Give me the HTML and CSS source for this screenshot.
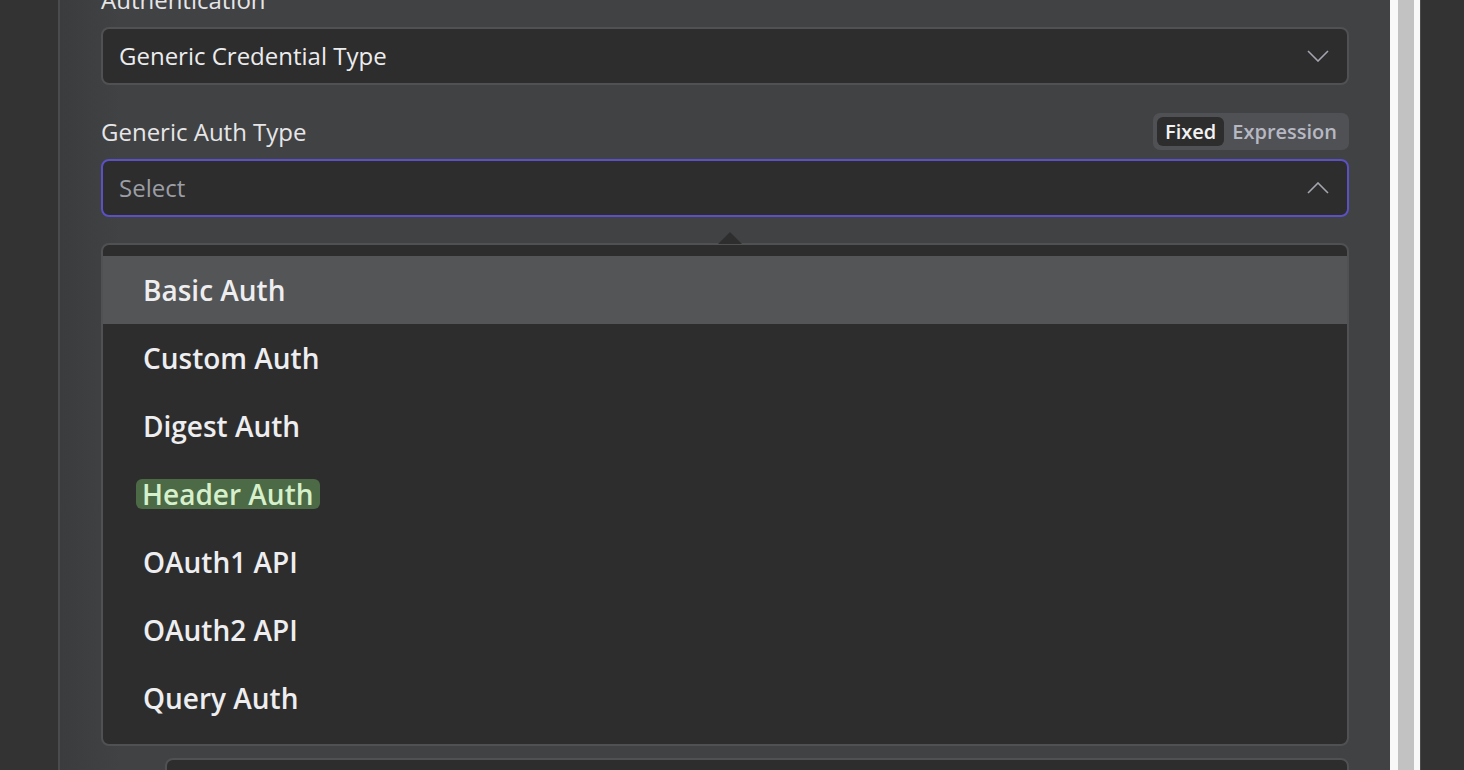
FILE: index.html
```html
<!DOCTYPE html>
<html>
<head>
<meta charset="utf-8">
<link rel="stylesheet" href="styles.css">
</head>
<body>
<div class="screen">
  <div class="gutter"></div>
  <div class="panel">
    <div class="form">
      <div class="field">
        <div class="label-row"><span class="label">Authentication</span></div>
        <div class="select">
          <span class="value">Generic Credential Type</span>
          <svg class="chev" width="22" height="12" viewBox="0 0 22 12"><path d="M1 1 L11 11 L21 1" fill="none" stroke="#a4a6ae" stroke-width="1.6"/></svg>
        </div>
      </div>
      <div class="field field2">
        <div class="label-row">
          <span class="label">Generic Auth Type</span>
          <div class="toggle"><span class="opt active">Fixed</span><span class="opt">Expression</span></div>
        </div>
        <div class="select focused">
          <span class="placeholder">Select</span>
          <svg class="chev" width="22" height="12" viewBox="0 0 22 12"><path d="M1 11 L11 1 L21 11" fill="none" stroke="#a4a6ae" stroke-width="1.6"/></svg>
        </div>
        <div class="dropdown">
          <span class="arrow"></span>
          <ul class="menu">
            <li class="item hover">Basic Auth</li>
            <li class="item">Custom Auth</li>
            <li class="item">Digest Auth</li>
            <li class="item"><span class="mark">Header Auth</span></li>
            <li class="item">OAuth1 API</li>
            <li class="item">OAuth2 API</li>
            <li class="item">Query Auth</li>
          </ul>
        </div>
        <div class="nested"></div>
      </div>
    </div>
  </div>
  <div class="scrollbar"><div class="thumb"></div></div>
  <div class="side"></div>
</div>
</body>
</html>
```

FILE: styles.css
```css
* { box-sizing: border-box; }
html, body { margin: 0; padding: 0; }
body {
  background: #333333;
  font-family: "Open Sans", "Noto Sans", sans-serif;
  overflow: hidden;
}
.screen {
  display: flex;
  width: 1464px;
  height: 770px;
  overflow: hidden;
}
.gutter {
  width: 58px;
  flex: none;
  background: #333333;
}
.panel {
  width: 1332px;
  flex: none;
  background: linear-gradient(90deg, #3b3c3e 0px, #414244 60px, #414244 100%);
  border-left: 2px solid #4a4b4d;
  padding: 0 41px 0 41px;
  overflow: hidden;
}
.form {
  margin-top: -19px;
}
.label-row {
  display: flex;
  align-items: center;
  justify-content: space-between;
  height: 37px;
  margin-bottom: 9px;
}
.label {
  font-size: 24px;
  color: #e6e6e8;
  line-height: 1;
}
.select {
  height: 58px;
  border: 2px solid #505153;
  border-radius: 8px;
  background: #2d2d2d;
  display: flex;
  align-items: center;
  justify-content: space-between;
  padding: 0 18px 0 16px;
  font-size: 24px;
  line-height: 1;
}
.select.focused {
  border-color: #5b50c4;
}
.value { color: #ececee; }
.placeholder { color: #9c9ea6; }
.chev { flex: none; }
.field2 { margin-top: 28px; }
.toggle {
  display: flex;
  align-items: center;
  height: 37px;
  padding: 4px;
  background: #505154;
  border-radius: 7px;
  font-size: 20px;
  font-weight: 600;
}
.opt {
  color: #b6b8c3;
  padding: 0 8px;
  height: 29px;
  display: flex;
  align-items: center;
  border-radius: 6px;
}
.opt.active {
  background: #2d2d2d;
  color: #f2f2f2;
}
.dropdown {
  position: relative;
  margin-top: 26px;
}
.arrow {
  position: absolute;
  left: 617px;
  top: -11px;
  width: 0;
  height: 0;
  border-left: 12px solid transparent;
  border-right: 12px solid transparent;
  border-bottom: 12px solid #2e2e2e;
}
.menu {
  list-style: none;
  margin: 0;
  padding: 11px 0 12px;
  border: 2px solid #505153;
  border-radius: 8px;
  background: #2d2d2d;
}
.item {
  height: 68px;
  display: flex;
  align-items: center;
  padding-left: 40px;
  font-size: 28px;
  font-weight: 600;
  color: #eeeef0;
}
.item.hover {
  background: #545557;
}
.mark {
  background: #4c6a45;
  color: #d6f0cc;
  border-radius: 6px;
  padding: 0 6px;
  margin-left: -7px;
  line-height: 30px;
}
.nested {
  margin: 12px 0 0 64px;
  height: 60px;
  border: 2px solid #505153;
  border-radius: 8px;
  background: #2d2d2d;
}
.scrollbar {
  width: 31px;
  flex: none;
  background: #f8f8f8;
  padding: 0 6px 0 8px;
  border-right: 1px solid #4a4a4a;
}
.thumb {
  width: 16px;
  height: 100%;
  background: #c2c2c2;
}
.side {
  flex: 1;
  background: #333333;
}
```
